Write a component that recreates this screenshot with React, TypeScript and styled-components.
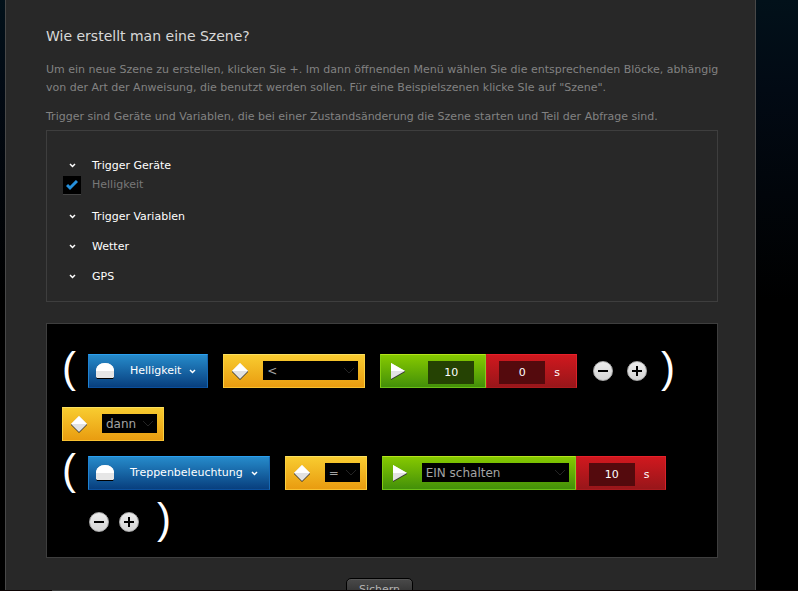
import React from "react";
import styled, { createGlobalStyle } from "styled-components";

const GlobalStyle = createGlobalStyle`
  * { box-sizing: border-box; }
  html, body { margin: 0; padding: 0; background: #000; }
  body, button, input, select {
    font-family: Verdana, "DejaVu Sans", sans-serif;
    font-size: 11px;
  }
`;

const Page = styled.div`
  display: grid;
  grid-template-rows: minmax(0, 1fr) 1px;
  height: 100vh;
  overflow: hidden;
  background: linear-gradient(#02111a, #020a14 90px, #000 300px);
`;

const Panel = styled.main`
  margin: 0 42px 0 5px;
  padding: 26px 30px 0 40px;
  overflow: hidden;
  background: #282828;
  border: solid #484848;
  border-width: 0 1px;
`;

const Footer = styled.div`
  padding-left: 52px;
  background: #0d0504;
`;

const FooterTab = styled.div`
  width: 48px;
  height: 1px;
  background: #3c3c3c;
`;

const Title = styled.h1`
  margin: 0 0 15px;
  font-size: 14px;
  line-height: 20px;
  font-weight: 400;
  color: #d8d8d8;
`;

const Text = styled.p`
  margin: 0 0 11px;
  line-height: 18px;
  color: #828282;
`;

const Box = styled.section<{ $dark?: boolean }>`
  margin: 0 7px 21px 0;
  padding: ${(p) => (p.$dark ? "30px 15px 18px" : "25px 16px 16px")};
  background: ${(p) => (p.$dark ? "#000" : "transparent")};
  border: 1px solid #3e3e3e;
`;

const Intro = styled.div`
  margin-bottom: -7px;
`;

const Group = styled.div`
  margin-bottom: 12px;
  &:last-child { margin-bottom: 0; }
`;

const GroupToggle = styled.button`
  display: grid;
  grid-template-columns: 18px auto;
  column-gap: 11px;
  align-items: center;
  justify-items: center;
  height: 18px;
  padding: 0;
  border: 0;
  background: none;
  color: #fff;
`;

const CheckRow = styled.label`
  display: grid;
  grid-template-columns: 18px auto;
  column-gap: 11px;
  justify-content: start;
  align-items: center;
  height: 21px;
  line-height: 18px;
  color: #787878;
`;

const CheckCell = styled.span`
  display: grid;
  margin-top: 2px;
  > * { grid-area: 1 / 1; }
  svg { pointer-events: none; place-self: center; }
`;

const Check = styled.input`
  appearance: none;
  width: 18px;
  height: 19px;
  margin: 0;
  background: #000;
  border-bottom: 1px solid #444;
`;

const Line = styled.div`
  display: flex;
  align-items: center;
  height: 34px;
  margin-bottom: 15px;
  &:first-child { margin-bottom: 19px; }
  &:last-child { margin-bottom: 0; }
`;

const Paren = styled.span`
  width: 26px;
  flex: none;
  padding-bottom: 6px;
  font-family: Arial, "Liberation Sans", sans-serif;
  font-size: 42px;
  line-height: 34px;
  color: #fff;
`;

const tones = {
  blue: "background: linear-gradient(#268bcb, #083f7e); border-color: #2ba0f0 #1668b4 #0b4f9c #1e82d4;",
  yellow: "background: linear-gradient(#f8cc30, #e99c10); border-color: #fbe060 #fbd040 #f8c030 #fbd040;",
  green: "background: linear-gradient(#86c900, #439009); border-color: #b4e41c #84cc20 #6abf18 #84cc10;",
  red: "background: linear-gradient(#d0181e, #98161a); border-color: #e8202a #d8222a #a81a1e #c8181e;",
};

const Block = styled.div<{ $tone: keyof typeof tones }>`
  display: flex;
  align-items: center;
  flex: none;
  height: 34px;
  padding: 0 6px 0 ${(p) => (p.$tone === "blue" ? "6px" : "7px")};
  margin-right: ${(p) => (p.$tone === "blue" || p.$tone === "yellow" ? "15px" : "0")};
  border: 1px solid;
  color: #fff;
  ${(p) => tones[p.$tone]}
  > svg { flex: none; }
`;

const DeviceButton = styled.button`
  display: flex;
  align-items: center;
  gap: 8px;
  height: 32px;
  margin-left: 15px;
  padding: 0 5px 2px 0;
  border: 0;
  background: none;
  color: #fff;
  svg { margin-top: 2px; }
`;

const SelectWrap = styled.span<{ $width: number }>`
  display: grid;
  align-items: center;
  width: ${(p) => p.$width}px;
  height: 19px;
  margin: 0 0 1px 14px;
  background: #000;
  > * { grid-area: 1 / 1; }
  svg { justify-self: end; margin-right: 3px; pointer-events: none; }
`;

const Select = styled.select`
  appearance: none;
  width: 100%;
  height: 19px;
  margin: 0;
  padding: 0 0 0 4px;
  border: 0;
  background: none;
  color: #a4a4a4;
  font-size: 12px;
`;

const NumberBox = styled.input<{ $tone: "green" | "red" }>`
  width: 46px;
  height: 23px;
  margin: ${(p) => (p.$tone === "green" ? "3px 5px 0 22px" : "3px 4px 0 5px")};
  padding: 0;
  border: 0;
  text-align: center;
  color: #fff;
  background: ${(p) => (p.$tone === "green" ? "#254203" : "#540a0d")};
`;

const Unit = styled.label`
  margin: 3px 10px 0 5px;
`;

const Actions = styled.div<{ $wide?: boolean }>`
  display: flex;
  gap: ${(p) => (p.$wide ? "14px" : "10px")};
  margin: ${(p) => (p.$wide ? "0 14px 0 16px" : "0 18px 0 27px")};
`;

const RoundButton = styled.button`
  display: flex;
  align-items: center;
  justify-content: center;
  width: 20px;
  height: 20px;
  padding: 0;
  border: 1px solid #aaa;
  border-radius: 50%;
  background: linear-gradient(#ececec, #d4d4d4);
`;

const Save = styled.button`
  display: block;
  width: 67px;
  height: 22px;
  margin: -1px 0 0 300px;
  padding: 0;
  border: 1px solid #000;
  border-radius: 5px;
  background: linear-gradient(#4a4a4a, #2a2a2a);
  box-shadow: inset 0 1px #555;
  color: #b4b4b4;
`;

const Arrow = () => (
  <svg width="7" height="6" viewBox="0 0 14 12" fill="none" stroke="#fff" strokeWidth="3">
    <path d="M2 4l5 5 5-5" />
  </svg>
);

const Lamp = () => (
  <svg width="20" height="18" viewBox="0 0 20 18">
    <path d="M1 9h18v6l-1 2H2l-1-2z" fill="#000" />
    <path d="M1 9C1 4 5 1 10 1s9 3 9 8v6l-1 1H2l-1-1z" fill="#e6e6e6" />
    <path d="M1 9C1 4 5 1 10 1s9 3 9 8z" fill="#fff" />
  </svg>
);

const Diamond = () => (
  <svg width="18" height="18" viewBox="0 0 18 18">
    <path d="M1 9h16v1l-8 8-8-8z" fill="#333" />
    <path d="M9 1l8 8-8 8-8-8z" fill="#e2e2e2" />
    <path d="M9 1l8 8H1z" fill="#fff" />
  </svg>
);

const Play = () => (
  <svg width="18" height="18" viewBox="0 0 18 18">
    <path d="M3 9h14v1L3 18z" fill="#333" />
    <path d="M3 1l14 8-14 8z" fill="#e2e2e2" />
    <path d="M3 1l14 8H3z" fill="#fff" />
  </svg>
);

const Sign = ({ plus }: { plus?: boolean }) => (
  <svg width="12" height="12" viewBox="0 0 12 12" stroke="#000" strokeWidth="2">
    <path d={plus ? "M1 6h10M6 1v10" : "M1 6h10"} />
  </svg>
);

const Dropdown = ({ label, value, width }: { label: string; value: string; width: number }) => (
  <SelectWrap $width={width}>
    <Select aria-label={label}>
      <option>{value}</option>
    </Select>
    <svg width="12" height="8" viewBox="0 0 12 8" fill="none" stroke="#242424">
      <path d="M1 1l5 5 5-5" />
    </svg>
  </SelectWrap>
);

const Device = ({ name }: { name: string }) => (
  <Block $tone="blue">
    <Lamp />
    <DeviceButton>
      <span>{name}</span>
      <Arrow />
    </DeviceButton>
  </Block>
);

const Operator = ({ label, value, width }: { label: string; value: string; width: number }) => (
  <Block $tone="yellow">
    <Diamond />
    <Dropdown label={label} value={value} width={width} />
  </Block>
);

const Delay = ({ id, value }: { id: string; value: string }) => (
  <Block $tone="red">
    <NumberBox $tone="red" id={id} defaultValue={value} />
    <Unit htmlFor={id}>s</Unit>
  </Block>
);

const AddRemove = ({ wide }: { wide?: boolean }) => (
  <Actions $wide={wide}>
    <RoundButton aria-label="Entfernen"><Sign /></RoundButton>
    <RoundButton aria-label="Hinzufügen"><Sign plus /></RoundButton>
  </Actions>
);

const Toggle = ({ children }: { children: React.ReactNode }) => (
  <GroupToggle>
    <Arrow />
    <span>{children}</span>
  </GroupToggle>
);

export default function App() {
  return (
    <Page>
      <GlobalStyle />
      <Panel>
        <Intro>
          <Title>Wie erstellt man eine Szene?</Title>
          <Text>
            Um ein neue Szene zu erstellen, klicken Sie +. Im dann öffnenden Menü wählen Sie die
            entsprechenden Blöcke, abhängig von der Art der Anweisung, die benutzt werden sollen.
            Für eine Beispielszenen klicke SIe auf "Szene".
          </Text>
          <Text>
            Trigger sind Geräte und Variablen, die bei einer Zustandsänderung die Szene starten und
            Teil der Abfrage sind.
          </Text>
        </Intro>
        <Box>
          <Group>
            <Toggle>Trigger Geräte</Toggle>
            <CheckRow>
              <CheckCell>
                <Check type="checkbox" defaultChecked />
                <svg width="12" height="11" viewBox="0 0 12 11" fill="none" stroke="#2590dc" strokeWidth="3">
                  <path d="M1 5l3 3L11 1" />
                </svg>
              </CheckCell>
              Helligkeit
            </CheckRow>
          </Group>
          <Group><Toggle>Trigger Variablen</Toggle></Group>
          <Group><Toggle>Wetter</Toggle></Group>
          <Group><Toggle>GPS</Toggle></Group>
        </Box>
        <Box $dark>
          <Line>
            <Paren>(</Paren>
            <Device name="Helligkeit" />
            <Operator label="Vergleich" value="<" width={95} />
            <Block $tone="green">
              <Play />
              <NumberBox $tone="green" aria-label="Wert" defaultValue="10" />
            </Block>
            <Delay id="delay-condition" value="0" />
            <AddRemove wide />
            <Paren>)</Paren>
          </Line>
          <Line>
            <Operator label="Verknüpfung" value="dann" width={55} />
          </Line>
          <Line>
            <Paren>(</Paren>
            <Device name="Treppenbeleuchtung" />
            <Operator label="Zuweisung" value="=" width={35} />
            <Block $tone="green">
              <Play />
              <Dropdown label="Aktion" value="EIN schalten" width={147} />
            </Block>
            <Delay id="delay-action" value="10" />
          </Line>
          <Line>
            <AddRemove />
            <Paren>)</Paren>
          </Line>
        </Box>
        <Save>Sichern</Save>
      </Panel>
      <Footer>
        <FooterTab />
      </Footer>
    </Page>
  );
}
